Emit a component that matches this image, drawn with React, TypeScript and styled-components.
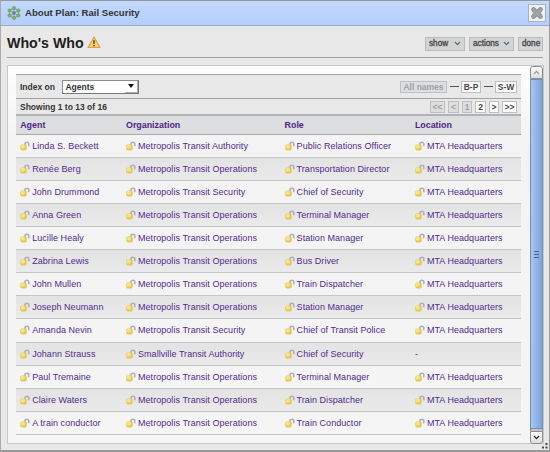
import React from "react";
import styled, { createGlobalStyle } from "styled-components";

const Global = createGlobalStyle`
  * { box-sizing: border-box; }
  html, body { margin: 0; padding: 0; overflow: hidden; }
  body { font-family: "Liberation Sans", Arial, sans-serif; color: #343434; }
  svg { display: block; flex: none; }
`;

const Window = styled.div`
  width: 550px;
  height: 452px;
  display: flex;
  flex-direction: column;
  background: #e8e8e8;
  border: 1px solid #999;
  border-left-color: #aaa;
  border-bottom-width: 2px;
  position: relative;
`;

const TitleBar = styled.header`
  height: 25px;
  flex: none;
  display: flex;
  align-items: center;
  padding: 0 3px 0 6px;
  background: linear-gradient(#c3d9ff, #b3ceff);
  border-bottom: 1px solid #9aa9c4;
`;

const Title = styled.span`
  flex: 1;
  margin-left: 4px;
  font-size: 9.6px;
  font-weight: bold;
  line-height: 12px;
`;

const CloseButton = styled.button`
  width: 18px;
  height: 18px;
  padding: 0;
  display: flex;
  align-items: center;
  justify-content: center;
  background: #eef0f4;
  border: 1px solid #a9b2c2;
`;

const Heading = styled.div`
  height: 32px;
  flex: none;
  margin: 0 6px;
  display: flex;
  align-items: center;
  border-bottom: 1px solid #a2a2a2;
`;

const PageTitle = styled.h1`
  margin: 3px 3px 0 0;
  font-size: 14.2px;
  line-height: 18px;
  color: #202020;
`;

const WarningSlot = styled.span`
  margin-top: 2px;
`;

const HeadingActions = styled.div`
  margin: 4px 0 0 auto;
  display: flex;
  gap: 4px;
`;

const ActionButton = styled.button<{ $width: number }>`
  width: ${(p) => p.$width}px;
  height: 14px;
  padding: 0 3px;
  display: flex;
  align-items: center;
  justify-content: space-between;
  font: 8.2px/12px "Liberation Sans", Arial, sans-serif;
  -webkit-text-stroke: 0.3px #444;
  color: #444;
  background: #d2d4d5;
  border: 1px solid #b9bbbc;
`;

const Panel = styled.main`
  margin: 7px 5px 0 6px;
  height: 379px;
  flex: none;
  display: flex;
  background: linear-gradient(#fdfdfd, #f3f3f3 80px, #f5f5f5);
  border: 1px solid #c9c9c9;
`;

const Content = styled.div`
  width: 505px;
  margin: 8px 0 0 8px;
`;

const IndexBar = styled.div`
  height: 24px;
  padding: 0 4px;
  display: flex;
  align-items: center;
  background: #e8e8e8;
  border-top: 1px solid #a2a2a2;
  font-size: 8.5px;
  font-weight: bold;
`;

const SelectBox = styled.div`
  width: 77px;
  height: 14px;
  margin-left: 7.5px;
  padding-left: 2px;
  display: flex;
  align-items: center;
  justify-content: space-between;
  background: #fff;
  border: 1px solid #8c8c8c;
  border-right-color: #777;
  border-bottom-color: #777;
`;

const SelectArrow = styled.span`
  width: 13px;
  height: 12px;
  display: flex;
  align-items: center;
  justify-content: center;
  border-bottom: 1px solid #aaa;
  border-right: 1px solid #aaa;
`;

const Ranges = styled.div<{ $gap: number }>`
  margin-left: auto;
  display: flex;
  align-items: center;
  gap: ${(p) => p.$gap}px;
`;

const PageButton = styled.span<{ $width: number; $off?: boolean }>`
  width: ${(p) => p.$width}px;
  height: 12px;
  font-size: 8.5px;
  font-weight: bold;
  line-height: 10px;
  text-align: center;
  white-space: nowrap;
  color: ${(p) => (p.$off ? "#a1a1a1" : "#4a4a4a")};
  background: ${(p) => (p.$off ? "#dcdedf" : "#fbfbfb")};
  border: 1px solid #bdbfc0;
`;

const Dash = styled.span`
  width: 9px;
  height: 1px;
  background: #555;
`;

const CountBar = styled(IndexBar)`
  height: 16px;
  padding-top: 1px;
`;

const Grid = styled.div`
  display: grid;
  grid-template-columns: 105.8px 158.6px 130.3px 1fr;
  align-items: center;
  padding-left: 4.2px;
`;

const HeaderRow = styled(Grid)`
  height: 20.8px;
  background: #dcdedf;
  border-top: 2px solid #b2b2b2;
  border-bottom: 1px solid #aaa;
  color: #4d2488;
  font-size: 8.9px;
  font-weight: bold;
`;

const Row = styled(Grid)<{ $shade: boolean }>`
  height: 23.08px;
  background: ${(p) => (p.$shade ? "linear-gradient(#e3e3e3, #eaeaea)" : "transparent")};
  border-bottom: 1px solid #c4c4c4;
`;

const Cell = styled.div`
  display: flex;
  align-items: center;
  gap: 2px;
  font-size: 9px;
  letter-spacing: 0.05px;
  line-height: 12px;
  white-space: nowrap;
  color: #532a91;
`;

const ScrollTrack = styled.div`
  width: 13px;
  margin-left: 9px;
  height: 378px;
  display: flex;
  flex-direction: column;
`;

const ScrollArrow = styled.div<{ $down?: boolean }>`
  height: 13px;
  flex: none;
  display: flex;
  align-items: center;
  justify-content: center;
  background: linear-gradient(#fff, #dedede);
  border: 1px solid #8d8d8d;
  border-radius: ${(p) => (p.$down ? "0 0 3px 3px" : "3px 3px 0 0")};
`;

const ScrollThumb = styled.div`
  flex: 1;
  display: flex;
  flex-direction: column;
  align-items: center;
  justify-content: center;
  gap: 2px;
  background: linear-gradient(90deg, #a9c6ee, #94b7e6 45%, #7da5da);
  border: 1px solid #6f8fbd;
`;

const Grip = styled.span`
  width: 5px;
  height: 1px;
  background: #426698;
`;

const ScrollGap = styled.div`
  height: 2px;
  background: #c4c4c4;
  border: solid #8d8d8d;
  border-width: 0 1px;
`;

const ResizeHandle = styled.div`
  position: absolute;
  right: 1px;
  bottom: 1px;
`;

const Lock = () => (
  <svg width="10" height="10" viewBox="0 0 10 10">
    <path d="M5 4.6V3c0-2.4 3.8-2.4 3.8 0v2.2" fill="none" stroke="#b0b0b4" strokeWidth="1.6" />
    <rect x="0.3" y="3.4" width="6.4" height="6" rx="1.6" fill="#e2c75c" />
    <rect x="0.8" y="4" width="4" height="3.6" rx="1" fill="#f8e57c" />
  </svg>
);

const Chevron = ({ up = false, color = "#666" }: { up?: boolean; color?: string }) => (
  <svg width="7" height="5" viewBox="0 0 7 5">
    <path d={up ? "M1 4l2.5-2.7L6 4" : "M1 1l2.5 2.7L6 1"} fill="none" stroke={color} strokeWidth="1.2" />
  </svg>
);

const Network = () => (
  <svg width="14" height="14" viewBox="0 0 14 14">
    <path d="M7 2l4.5 2.5v5L7 12 2.5 9.5v-5zM7 2v10M2.5 4.5l9 5M11.5 4.5l-9 5" fill="none" stroke="#8d9b9b" strokeWidth="1.1" />
    {[[7, 2], [11.5, 4.5], [11.5, 9.5], [7, 12], [2.5, 9.5], [2.5, 4.5]].map(([x, y]) => (
      <circle key={`${x}-${y}`} cx={x} cy={y} r="1.7" fill="#79b856" stroke="#6a8d60" strokeWidth=".4" />
    ))}
    <circle cx="7" cy="7" r="1.8" fill="#7472bc" />
  </svg>
);

const Warning = () => (
  <svg width="14" height="13" viewBox="0 0 14 13">
    <path d="M7 1L13 11.5H1z" fill="#ffcf62" stroke="#d9a05a" strokeWidth="1.2" strokeLinejoin="round" />
    <path d="M7 4.2v3.6M7 8.9v1.4" stroke="#493c38" strokeWidth="1.5" />
  </svg>
);

const transit = "Metropolis Transit ";
const people = [
  ["Linda S. Beckett", transit + "Authority", "Public Relations Officer"],
  ["Renée Berg", transit + "Operations", "Transportation Director"],
  ["John Drummond", transit + "Security", "Chief of Security"],
  ["Anna Green", transit + "Operations", "Terminal Manager"],
  ["Lucille Healy", transit + "Operations", "Station Manager"],
  ["Zabrina Lewis", transit + "Operations", "Bus Driver"],
  ["John Mullen", transit + "Operations", "Train Dispatcher"],
  ["Joseph Neumann", transit + "Operations", "Station Manager"],
  ["Amanda Nevin", transit + "Security", "Chief of Transit Police"],
  ["Johann Strauss", "Smallville Transit Authority", "Chief of Security"],
  ["Paul Tremaine", transit + "Operations", "Terminal Manager"],
  ["Claire Waters", transit + "Operations", "Train Dispatcher"],
  ["A train conductor", transit + "Operations", "Train Conductor"],
];

export default function App() {
  return (
    <Window>
      <Global />
      <TitleBar>
        <Network />
        <Title>About Plan: Rail Security</Title>
        <CloseButton aria-label="Close">
          <svg width="14" height="14" viewBox="0 0 14 14">
            <path d="M3.5 3.5l7 7M10.5 3.5l-7 7" stroke="#8c8c8c" strokeWidth="4.6" strokeLinecap="round" />
            <path d="M3.5 3.5l7 7M10.5 3.5l-7 7" stroke="#a2a2a2" strokeWidth="3" strokeLinecap="round" />
          </svg>
        </CloseButton>
      </TitleBar>
      <Heading>
        <PageTitle>Who's Who</PageTitle>
        <WarningSlot><Warning /></WarningSlot>
        <HeadingActions>
          <ActionButton $width={40}>show <Chevron /></ActionButton>
          <ActionButton $width={45}>actions <Chevron /></ActionButton>
          <ActionButton $width={25}>done</ActionButton>
        </HeadingActions>
      </Heading>
      <Panel>
        <Content>
          <IndexBar>
            Index on
            <SelectBox>
              Agents
              <SelectArrow>
                <svg width="6" height="4" viewBox="0 0 6 4"><path d="M0 0h6L3 4z" fill="#111" /></svg>
              </SelectArrow>
            </SelectBox>
            <Ranges $gap={2.5}>
              <PageButton $width={47} $off>All names</PageButton>
              <Dash />
              <PageButton $width={20}>B-P</PageButton>
              <Dash />
              <PageButton $width={22}>S-W</PageButton>
            </Ranges>
          </IndexBar>
          <CountBar>
            Showing 1 to 13 of 16
            <Ranges $gap={3}>
              <PageButton $width={15} $off>&lt;&lt;</PageButton>
              <PageButton $width={11} $off>&lt;</PageButton>
              <PageButton $width={10} $off>1</PageButton>
              <PageButton $width={11}>2</PageButton>
              <PageButton $width={10}>&gt;</PageButton>
              <PageButton $width={15}>&gt;&gt;</PageButton>
            </Ranges>
          </CountBar>
          <HeaderRow>
            <span>Agent</span>
            <span>Organization</span>
            <span>Role</span>
            <span>Location</span>
          </HeaderRow>
          {people.map(([name, organization, role], i) => (
            <Row key={name} $shade={i % 2 === 1}>
              <Cell><Lock />{name}</Cell>
              <Cell><Lock />{organization}</Cell>
              <Cell><Lock />{role}</Cell>
              {name === "Johann Strauss" ? <Cell>-</Cell> : <Cell><Lock />MTA Headquarters</Cell>}
            </Row>
          ))}
        </Content>
        <ScrollTrack>
          <ScrollArrow><Chevron up color="#999" /></ScrollArrow>
          <ScrollThumb><Grip /><Grip /><Grip /></ScrollThumb>
          <ScrollGap />
          <ScrollArrow $down><Chevron color="#222" /></ScrollArrow>
        </ScrollTrack>
      </Panel>
      <ResizeHandle>
        <svg width="6" height="6" viewBox="0 0 6 6">
          <path d="M3.5 0h2v2h-2zM0 3.5h2v2H0zM3.5 3.5h2v2h-2z" fill="#444" />
        </svg>
      </ResizeHandle>
    </Window>
  );
}
